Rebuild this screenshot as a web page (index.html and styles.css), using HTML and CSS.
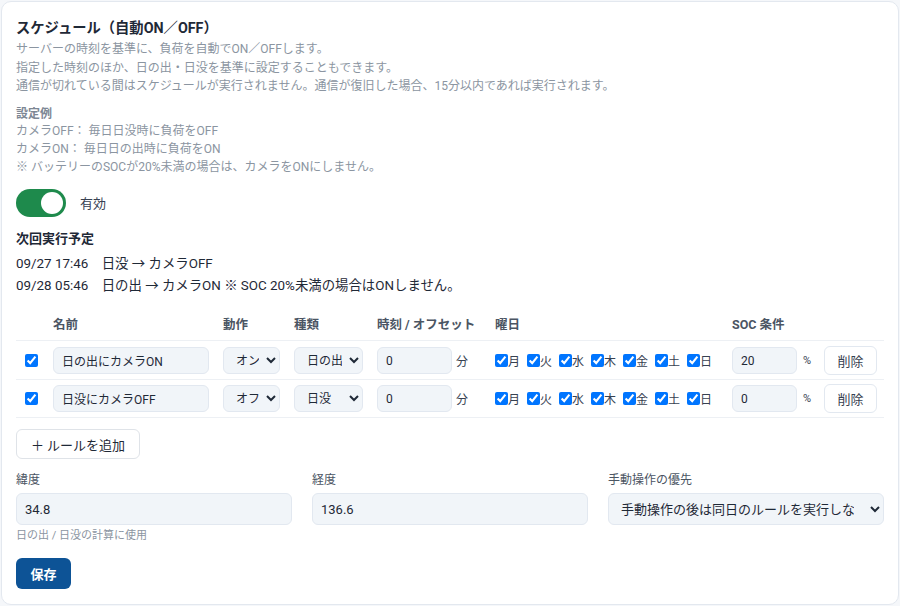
FILE: index.html
```html
<!DOCTYPE html>
<html lang="ja">
<head>
  <meta charset="UTF-8">
  <meta name="viewport" content="width=device-width, initial-scale=1.0">
  <title>スケジュール</title>
  <link rel="stylesheet" href="styles.css">
</head>
<body>

<div class="schedule-card">
  <h2 class="card-title">スケジュール（自動ON／OFF）</h2>
  <p class="card-desc">
    サーバーの時刻を基準に、負荷を自動でON／OFFします。<br>
    指定した時刻のほか、日の出・日没を基準に設定することもできます。<br>
    通信が切れている間はスケジュールが実行されません。通信が復旧した場合、15分以内であれば実行されます。
  </p>

  <div class="example">
    <div class="example-title">設定例</div>
    カメラOFF： 毎日日没時に負荷をOFF<br>
    カメラON： 毎日日の出時に負荷をON<br>
    ※ バッテリーのSOCが20%未満の場合は、カメラをONにしません。
  </div>

  <div class="toggle-row">
    <span class="toggle on"><span class="knob"></span></span>
    <span class="toggle-label">有効</span>
  </div>

  <div class="next-title">次回実行予定</div>
  <div class="next-list">
    <div>09/27 17:46　日没 → カメラOFF</div>
    <div>09/28 05:46　日の出 → カメラON ※ SOC 20%未満の場合はONしません。</div>
  </div>

  <table class="rules">
    <colgroup>
      <col style="width:30px"><col style="width:170px"><col style="width:71px"><col style="width:83px">
      <col style="width:118px"><col style="width:237px"><col style="width:92px"><col style="width:67px">
    </colgroup>
    <thead>
      <tr>
        <th></th><th>名前</th><th>動作</th><th>種類</th><th>時刻 / オフセット</th><th>曜日</th><th>SOC 条件</th><th></th>
      </tr>
    </thead>
    <tbody>
      <tr>
        <td class="chk-cell"><input type="checkbox" checked></td>
        <td><input class="field name-field" type="text" value="日の出にカメラON"></td>
        <td><select class="field act-field"><option>オン</option><option>オフ</option></select></td>
        <td><select class="field type-field"><option>日の出</option><option>日没</option><option>時刻</option></select></td>
        <td><div class="inline"><input class="field time-field" type="text" value="0"><span>分</span></div></td>
        <td>
          <div class="days">
            <label><input type="checkbox" checked>月</label>
            <label><input type="checkbox" checked>火</label>
            <label><input type="checkbox" checked>水</label>
            <label><input type="checkbox" checked>木</label>
            <label><input type="checkbox" checked>金</label>
            <label><input type="checkbox" checked>土</label>
            <label><input type="checkbox" checked>日</label>
          </div>
        </td>
        <td><div class="inline"><input class="field soc-field" type="text" value="20"><span class="pct">%</span></div></td>
        <td><button class="del-btn">削除</button></td>
      </tr>
      <tr>
        <td class="chk-cell"><input type="checkbox" checked></td>
        <td><input class="field name-field" type="text" value="日没にカメラOFF"></td>
        <td><select class="field act-field"><option>オフ</option><option>オン</option></select></td>
        <td><select class="field type-field"><option>日没</option><option>日の出</option><option>時刻</option></select></td>
        <td><div class="inline"><input class="field time-field" type="text" value="0"><span>分</span></div></td>
        <td>
          <div class="days">
            <label><input type="checkbox" checked>月</label>
            <label><input type="checkbox" checked>火</label>
            <label><input type="checkbox" checked>水</label>
            <label><input type="checkbox" checked>木</label>
            <label><input type="checkbox" checked>金</label>
            <label><input type="checkbox" checked>土</label>
            <label><input type="checkbox" checked>日</label>
          </div>
        </td>
        <td><div class="inline"><input class="field soc-field" type="text" value="0"><span class="pct">%</span></div></td>
        <td><button class="del-btn">削除</button></td>
      </tr>
    </tbody>
  </table>

  <button class="add-btn">＋ ルールを追加</button>

  <div class="geo-grid">
    <div>
      <label class="geo-label">緯度</label>
      <input class="field geo-field" type="text" value="34.8">
      <div class="hint">日の出 / 日没の計算に使用</div>
    </div>
    <div>
      <label class="geo-label">経度</label>
      <input class="field geo-field" type="text" value="136.6">
    </div>
    <div>
      <label class="geo-label">手動操作の優先</label>
      <select class="field geo-field geo-select"><option>手動操作の後は同日のルールを実行しない</option></select>
    </div>
  </div>

  <button class="save-btn">保存</button>
</div>

</body>
</html>
```

FILE: styles.css
```css
* {
  margin: 0;
  padding: 0;
  box-sizing: border-box;
}

body {
  font-family: Roboto, 'Noto Sans CJK JP', sans-serif;
  background-color: #f5f7fa;
  color: #1f2937;
  padding: 1px;
}

.schedule-card {
  background-color: #fff;
  border: 1px solid #e3e8ef;
  border-radius: 10px;
  padding: 16px 14px 15px;
}

.card-title {
  font-size: 14.3px;
  line-height: 20px;
  font-weight: bold;
  color: #1f2937;
  margin-bottom: 2px;
}

.card-desc {
  font-size: 12px;
  line-height: 18.5px;
  color: #8b95a1;
}

/* Example block */
.example {
  margin-top: 10px;
  font-size: 12px;
  line-height: 17.8px;
  color: #8b95a1;
}

.example-title {
  font-weight: bold;
  color: #7d8794;
}

/* Toggle */
.toggle-row {
  display: flex;
  align-items: center;
  gap: 14px;
  margin-top: 12px;
}

.toggle {
  position: relative;
  width: 50px;
  height: 28px;
  border-radius: 14px;
  background-color: #d1d5db;
}

.toggle.on {
  background-color: #1e8a4c;
}

.toggle .knob {
  position: absolute;
  top: 3px;
  left: 3px;
  width: 22px;
  height: 22px;
  border-radius: 50%;
  background-color: #fff;
}

.toggle.on .knob {
  left: 25px;
}

.toggle-label {
  font-size: 13px;
  color: #374151;
}

/* Next run */
.next-title {
  margin-top: 12px;
  font-size: 13px;
  line-height: 20px;
  font-weight: bold;
}

.next-list {
  margin-top: 4px;
  font-size: 13.4px;
  line-height: 22px;
}

/* Rules table */
.rules {
  width: 100%;
  margin-top: 11px;
  border-collapse: collapse;
  table-layout: fixed;
}

.rules th {
  height: 33px;
  padding: 0 7px;
  text-align: left;
  font-size: 12.5px;
  font-weight: bold;
  color: #4b5563;
  border-bottom: 1px solid #edf0f4;
}

.rules td {
  padding: 4px 7px;
  vertical-align: middle;
  border-bottom: 1px solid #edf0f4;
}

.rules tbody tr:first-child td {
  padding-top: 5px;
}

.rules .chk-cell {
  padding-left: 9px;
}

.rules .chk-cell input {
  display: block;
  width: 13px;
  height: 13px;
}

.field {
  font-family: inherit;
  font-size: 12px;
  color: #1f2937;
  background-color: #f1f5f9;
  border: 1px solid #e2e8f0;
  border-radius: 6px;
  height: 27px;
  padding: 0 8px;
  outline: none;
}

.name-field {
  width: 156px;
}

.act-field {
  width: 57px;
  padding: 0 4px 0 8px;
}

.type-field {
  width: 69px;
  padding: 0 4px 0 8px;
}

.time-field {
  width: 75px;
}

.soc-field {
  width: 65px;
}

.inline {
  display: flex;
  align-items: center;
  gap: 4px;
  font-size: 12px;
  color: #374151;
}

.inline .pct {
  margin-left: 2px;
  font-size: 11px;
}

.days {
  display: flex;
  align-items: center;
  gap: 7px;
}

.days label {
  display: flex;
  align-items: center;
  font-size: 12px;
  color: #374151;
}

.days input {
  width: 13px;
  height: 13px;
  margin: 0;
}

.del-btn {
  font-family: inherit;
  font-size: 13px;
  color: #374151;
  background-color: #fff;
  border: 1px solid #e2e8f0;
  border-radius: 6px;
  width: 53px;
  height: 29px;
  cursor: pointer;
}

.add-btn {
  display: block;
  margin-top: 11px;
  font-family: inherit;
  font-size: 13px;
  color: #1f2937;
  background-color: #fff;
  border: 1px solid #dfe3e8;
  border-radius: 6px;
  width: 124px;
  height: 30px;
  cursor: pointer;
}

/* Location */
.geo-grid {
  display: grid;
  grid-template-columns: 1fr 1fr 1fr;
  gap: 20px;
  margin-top: 12px;
}

.geo-label {
  display: block;
  font-size: 12px;
  line-height: 18px;
  color: #4b5563;
  margin-bottom: 4px;
}

.geo-field {
  width: 100%;
  height: 32px;
  font-size: 13px;
}

.geo-select {
  padding: 0 13px 0 8px;
}

.hint {
  margin-top: 3px;
  font-size: 11px;
  line-height: 16px;
  color: #8b95a1;
}

.save-btn {
  display: block;
  margin-top: 14px;
  font-family: inherit;
  font-size: 13px;
  font-weight: bold;
  color: #fff;
  background-color: #0d5396;
  border: none;
  border-radius: 6px;
  width: 55px;
  height: 31px;
  cursor: pointer;
}
```
